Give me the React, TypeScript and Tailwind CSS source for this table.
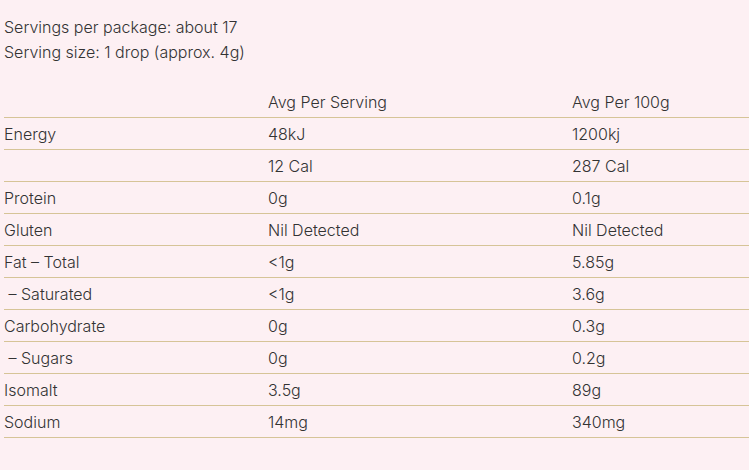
const rows: [string, string, string][] = [
  ["Energy", "48kJ", "1200kj"],
  ["", "12 Cal", "287 Cal"],
  ["Protein", "0g", "0.1g"],
  ["Gluten", "Nil Detected", "Nil Detected"],
  ["Fat – Total", "<1g", "5.85g"],
  ["\u00a0– Saturated", "<1g", "3.6g"],
  ["Carbohydrate", "0g", "0.3g"],
  ["\u00a0– Sugars", "0g", "0.2g"],
  ["Isomalt", "3.5g", "89g"],
  ["Sodium", "14mg", "340mg"],
]

export default function App() {
  return (
    <div className="min-h-[470px] w-full bg-[#fdf0f3] pl-1 pt-[15px] text-[16px] font-light text-[#333333] font-['Inter',sans-serif]">
      <div className="leading-[25px]">
        <p>Servings per package: about 17</p>
        <p>Serving size: 1 drop (approx. 4g)</p>
      </div>
      <div className="mt-[21px]">
        <div className="grid h-8 grid-cols-[264px_304px_1fr] items-center border-b border-[#d6c497]">
          <div></div>
          <div>Avg Per Serving</div>
          <div>Avg Per 100g</div>
        </div>
        {rows.map((r, i) => (
          <div
            key={i}
            className="grid h-8 grid-cols-[264px_304px_1fr] items-center border-b border-[#d6c497]"
          >
            <div>{r[0]}</div>
            <div>{r[1]}</div>
            <div>{r[2]}</div>
          </div>
        ))}
      </div>
    </div>
  )
}
